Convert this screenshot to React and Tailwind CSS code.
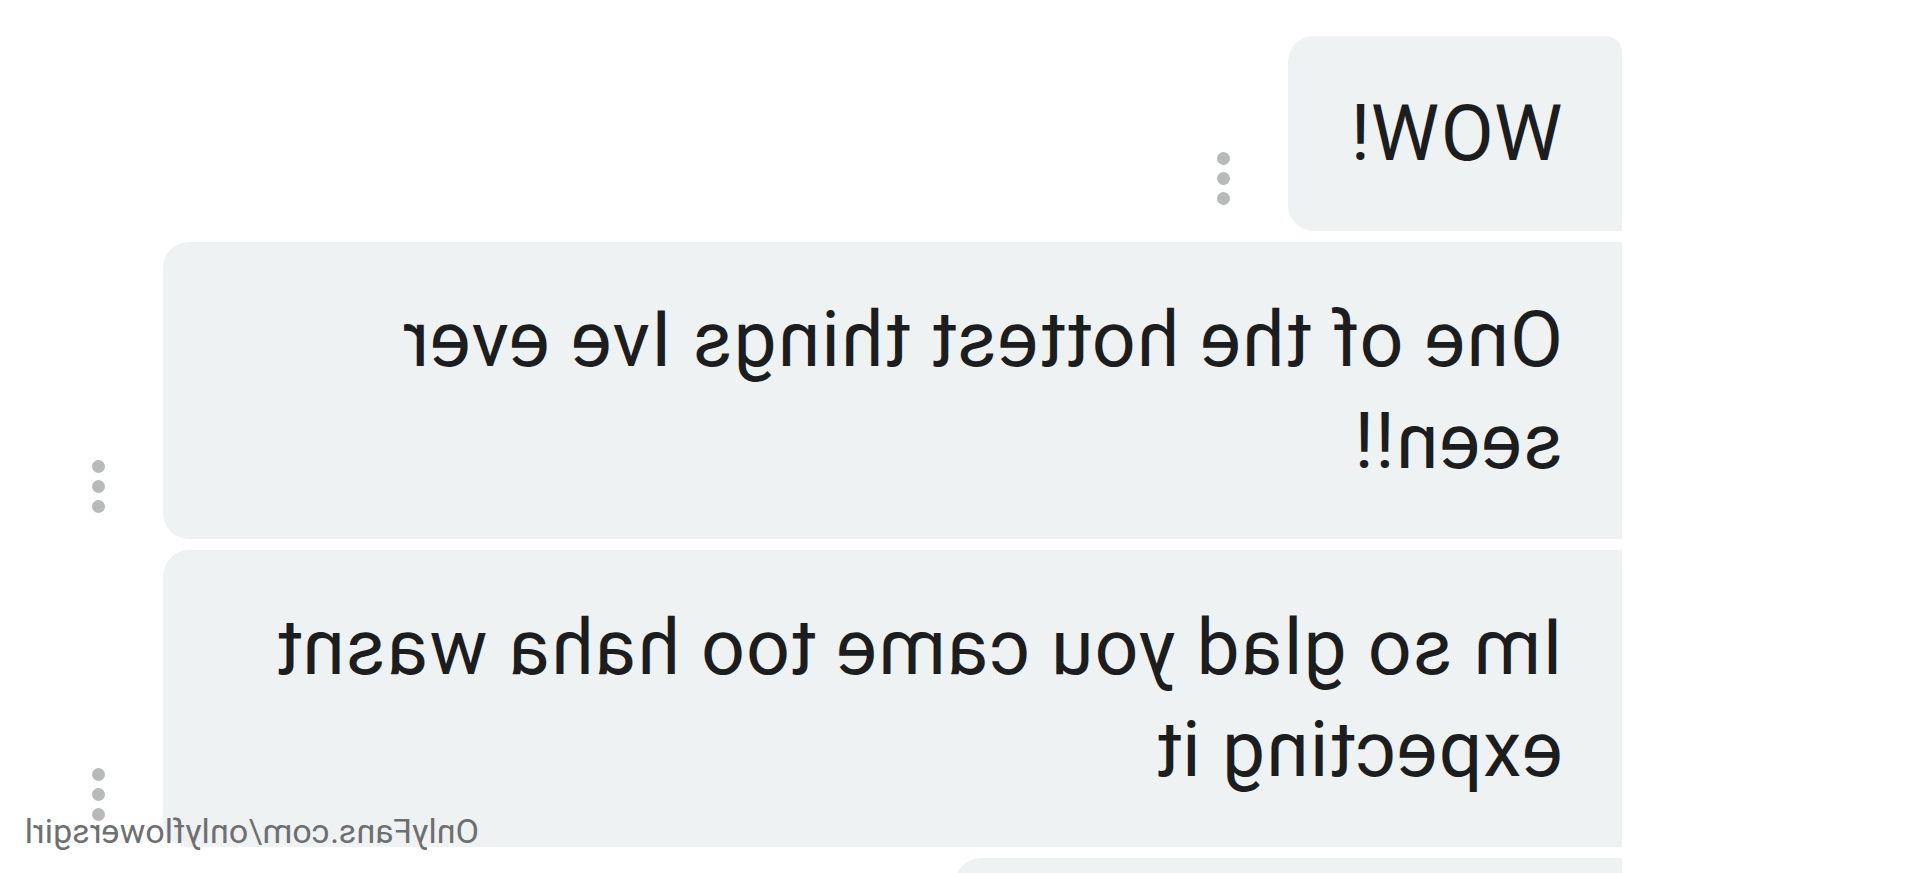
import React from 'react';

const messages = [
  { id: 1, text: 'WOW!', first: true },
  { id: 2, text: 'One of the hottest things Ive ever seen!!' },
  { id: 3, text: 'Im so glad you came too haha wasnt expecting it' },
];

function Dots() {
  return (
    <div className="flex flex-col gap-[7px] ml-[58px] mb-[26px] shrink-0">
      <span className="w-[13px] h-[13px] rounded-full bg-[#b7b9ba]" />
      <span className="w-[13px] h-[13px] rounded-full bg-[#b7b9ba]" />
      <span className="w-[13px] h-[13px] rounded-full bg-[#b7b9ba]" />
    </div>
  );
}

export default function App() {
  return (
    // the whole screenshot is mirrored, so lay it out normally and flip it
    <div className="relative w-[1920px] h-[873px] overflow-hidden bg-white -scale-x-100 font-['Roboto',sans-serif]">
      <div className="flex flex-col gap-[11px] pt-[36px] pl-[298px]">
        {messages.map(m => (
          <div key={m.id} className="flex items-end">
            <div
              className={`max-w-[1459px] bg-[#eff2f3] text-[#1b1d1e] text-[77px] leading-[102px] tracking-[1px] pl-[59px] pr-[62px] pt-[47px] pb-[46px] rounded-r-[26px] ${m.first ? 'rounded-tl-[16px]' : ''}`}
            >
              {m.text}
            </div>
            <Dots />
          </div>
        ))}
        <div className="w-[667px] h-[120px] bg-[#eff2f3] rounded-tr-[26px]" />
      </div>

      <div className="absolute left-[1441px] top-[811px] text-[34px] leading-[40px] text-[#6e6f70] tracking-[0.1px]">
        OnlyFans.com/onlyflowersgirl
      </div>
    </div>
  );
}
